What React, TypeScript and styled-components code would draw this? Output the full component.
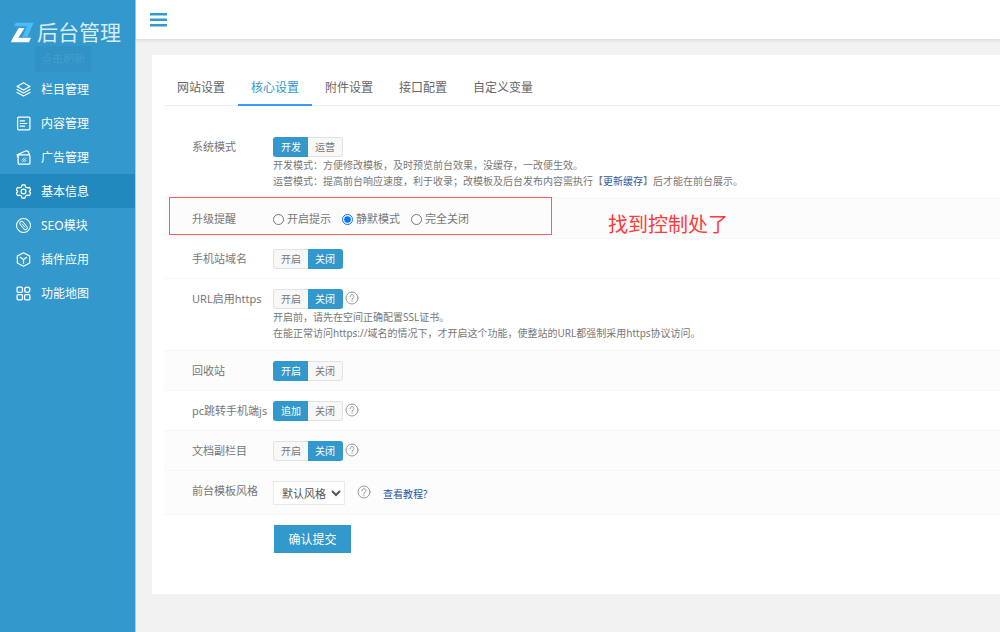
import React, { useState } from "react";
import styled, { createGlobalStyle, css } from "styled-components";

const blue = "#3398cc";

const GlobalStyle = createGlobalStyle`
  *, *::before, *::after { box-sizing: border-box; }
  body {
    margin: 0;
    background: #f2f2f2;
    color: #777;
    font-family: "Noto Sans", "Noto Sans CJK SC", sans-serif;
    font-size: 12px;
  }
  button, select, input { font-family: inherit; }
  a { text-decoration: none; }
`;

const Layout = styled.div`
  display: flex;
  min-height: 100vh;
`;

const Sidebar = styled.aside`
  flex: 0 0 136px;
  background: ${blue};
  border-right: 1px solid #a5cfe6;
`;

const Brand = styled.a`
  position: relative;
  display: flex;
  align-items: center;
  height: 72px;
  padding: 0 0 8px 11px;
  gap: 3px;
  color: #d9edf8;
  font-size: 21px;
  font-weight: 400;
  line-height: 24px;
  white-space: nowrap;
`;

const RefreshTip = styled.span`
  position: absolute;
  left: 35px;
  top: 46px;
  width: 56px;
  height: 26px;
  border-radius: 2px;
  background: #3092c5;
  color: #429fce;
  font-size: 11px;
  font-weight: 400;
  line-height: 26px;
  text-align: center;
`;

const Menu = styled.nav`
  display: flex;
  flex-direction: column;
`;

const MenuItem = styled.a<{ $active?: boolean }>`
  display: flex;
  align-items: center;
  gap: 10px;
  height: 34px;
  padding-left: 16px;
  color: #fff;
  font-size: 12px;
  background: ${(p) => (p.$active ? "#2289bf" : "transparent")};
  svg { width: 15px; height: 15px; flex: none; }
`;

const Main = styled.div`
  flex: 1;
  min-width: 0;
`;

const TopBar = styled.header`
  display: flex;
  align-items: center;
  height: 39px;
  padding-left: 14px;
  background: #fff;
  box-shadow: 0 1px 4px rgba(0, 0, 0, 0.12);
`;

const MenuButton = styled.button`
  display: flex;
  padding: 0;
  border: 0;
  background: none;
  color: ${blue};
`;

const Card = styled.section`
  margin: 16px 0 0 16px;
  padding: 15px 0 41px 12px;
  background: #fff;
`;

const Tabs = styled.nav`
  display: flex;
  height: 36px;
  border-bottom: 1px solid #eee;
`;

const Tab = styled.a<{ $active?: boolean }>`
  height: 36px;
  padding: 0 13px;
  line-height: 36px;
  color: ${(p) => (p.$active ? blue : "#666")};
  border-bottom: 2px solid ${(p) => (p.$active ? "#3a9bf5" : "transparent")};
`;

const Form = styled.form`
  padding-top: 21px;
`;

const Row = styled.div<{ $shaded?: boolean }>`
  position: relative;
  display: grid;
  grid-template-columns: 81px 1fr;
  padding: 10px 0 9px 28px;
  border-bottom: 1px solid #f7f7f7;
  background: ${(p) => (p.$shaded ? "#fcfcfc" : "#fff")};
`;

const labelText = css`
  font-size: 11px;
  line-height: 20px;
  white-space: nowrap;
`;

const RowLabel = styled.div`
  ${labelText}
`;

const Controls = styled.div<{ $gap?: number }>`
  display: flex;
  align-items: center;
  gap: ${(p) => p.$gap ?? 2}px;
`;

const ToggleGroup = styled.div`
  display: flex;
  height: 20px;
`;

const ToggleButton = styled.button<{ $on: boolean }>`
  width: 35px;
  padding: 0;
  border: 1px solid ${(p) => (p.$on ? blue : "#e2e2e2")};
  background: ${(p) => (p.$on ? blue : "#f8f8f8")};
  color: ${(p) => (p.$on ? "#fff" : "#777")};
  font-size: 10px;
  line-height: 18px;
  &:first-child { border-radius: 3px 0 0 3px; border-right: 0; }
  &:last-child { border-radius: 0 3px 3px 0; border-left: 0; }
`;

const Hint = styled.p`
  margin: 0;
  font-size: 10px;
  line-height: 16px;
`;

const TextLink = styled.a`
  color: #2a57a5;
  font-size: 10px;
`;

const RadioLabel = styled.label`
  display: flex;
  align-items: center;
  gap: 3px;
  ${labelText}
  input { width: 11px; height: 11px; margin: 0; }
`;

const ThemeSelect = styled.select`
  width: 72px;
  height: 24px;
  padding: 0 0 0 4px;
  border: 1px solid #eaeaea;
  background: #fff;
  color: #555;
  font-size: 11px;
`;

const HelpButton = styled.button`
  display: flex;
  padding: 0 0 2px;
  border: 0;
  background: none;
  color: #999;
`;

const Submit = styled.button`
  width: 77px;
  height: 28px;
  margin: 10px 0 0 110px;
  padding: 0;
  border: 0;
  background: ${blue};
  color: #fff;
  font-size: 12px;
`;

const Highlight = styled.span`
  position: absolute;
  left: 5px;
  top: -2px;
  width: 383px;
  height: 38px;
  border: 1px solid #ff5c5c;
  pointer-events: none;
`;

const Callout = styled.span`
  position: absolute;
  left: 444px;
  top: 11px;
  color: #ff3b3b;
  font-size: 20px;
  line-height: 30px;
  white-space: nowrap;
`;

const Icon = ({ children }: { children: React.ReactNode }) => (
  <svg viewBox="1 1 28 28" fill="none" stroke="currentColor" strokeWidth="2.3" strokeLinecap="round" strokeLinejoin="round" aria-hidden="true">
    {children}
  </svg>
);

const menu = [
  {
    text: "栏目管理",
    icon: <Icon><path d="M15 2.500 27 9.500 15 16 3 9.500Z" /><path d="m3 15 12 6.500L27 15M3 20.500 15 27l12-6.500" /></Icon>,
  },
  {
    text: "内容管理",
    icon: <Icon><rect x="4" y="3" width="23" height="24" rx="2" /><path d="M9 10h8M9 15h12M9 20h8" /></Icon>,
  },
  {
    text: "广告管理",
    icon: <Icon><rect x="5" y="10" width="22" height="17.500" rx="2" /><path d="M3 10 20 2.500l3.500 1L26 10M3 10l2 5" /><path d="m12 20 4-4M13 23l7-7M17 23l3-3" strokeWidth="1.600" /></Icon>,
  },
  {
    text: "基本信息",
    icon: <Icon><path d="M12.500 2.500h5l1.500 4 3 1.700 4-.8 2.500 4.300-2.700 3.300 2.700 3.300-2.500 4.300-4-.8-3 1.700-1.500 4h-5l-1.500-4-3-1.700-4 .8-2.500-4.300L4.200 15l-2.700-3.300L4 7.400l4 .8 3-1.700Z" /><circle cx="15" cy="15" r="4.500" /></Icon>,
  },
  {
    text: "SEO模块",
    icon: <Icon><circle cx="15" cy="15" r="13" strokeWidth="2" /><rect x="6" y="11.500" width="18" height="7" rx="3.500" transform="rotate(50 15 15)" strokeWidth="1.800" /><path d="m12.500 12 5 6" strokeWidth="1.800" /></Icon>,
  },
  {
    text: "插件应用",
    icon: <Icon><path d="M15 2.500 26.500 8.500v13L15 27.500 3.500 21.500v-13Z" /><path d="m9 11 6 4 6-4M15 15v7" /></Icon>,
  },
  {
    text: "功能地图",
    icon: <Icon><rect x="3" y="3" width="10" height="10" rx="2" /><circle cx="22" cy="8" r="5" /><rect x="3" y="17" width="10" height="10" rx="2" /><rect x="17" y="17" width="10" height="10" rx="2" /></Icon>,
  },
];

const tabs = ["网站设置", "核心设置", "附件设置", "接口配置", "自定义变量"];
const reminders = ["开启提示", "静默模式", "完全关闭"];

const Help = () => (
  <HelpButton type="button" aria-label="帮助">
    <svg width="14" height="14" viewBox="0 0 28 28" fill="none" stroke="currentColor" strokeWidth="2" strokeLinecap="round">
      <circle cx="14" cy="14" r="12" />
      <path d="M10 11.500c0-5.500 8-5.500 8-.5 0 3-4 3-4 6.500M14 20.500v.5" />
    </svg>
  </HelpButton>
);

interface ToggleProps {
  label: string;
  options?: string[];
  initial: number;
}

const Toggle = ({ label, options = ["开启", "关闭"], initial }: ToggleProps) => {
  const [selected, setSelected] = useState(initial);
  return (
    <ToggleGroup role="group" aria-label={label}>
      {options.map((text, i) => (
        <ToggleButton key={text} type="button" $on={selected === i} aria-pressed={selected === i} onClick={() => setSelected(i)}>
          {text}
        </ToggleButton>
      ))}
    </ToggleGroup>
  );
};

interface ToggleRowProps extends ToggleProps {
  shaded?: boolean;
  help?: boolean;
  children?: React.ReactNode;
}

const ToggleRow = ({ shaded, help, children, ...toggle }: ToggleRowProps) => (
  <Row $shaded={shaded}>
    <RowLabel>{toggle.label}</RowLabel>
    <div>
      <Controls>
        <Toggle {...toggle} />
        {help && <Help />}
      </Controls>
      {children}
    </div>
  </Row>
);

export default function App() {
  const [reminder, setReminder] = useState("静默模式");
  return (
    <>
      <GlobalStyle />
      <Layout>
        <Sidebar>
          <Brand href="#">
            <svg width="23" height="21" viewBox="0 0 69 63" aria-hidden="true">
              <path d="M14 2h54L50 44H35L48 13H9Z" fill="#4abcf8" />
              <path d="M23 18h18L22 47h38l-6 14H0l4-11Z" fill="#fff" />
            </svg>
            后台管理
            <RefreshTip>点击刷新</RefreshTip>
          </Brand>
          <Menu>
            {menu.map((m) => (
              <MenuItem key={m.text} href="#" $active={m.text === "基本信息"}>
                {m.icon}
                {m.text}
              </MenuItem>
            ))}
          </Menu>
        </Sidebar>
        <Main>
          <TopBar>
            <MenuButton type="button" aria-label="菜单">
              <svg width="17" height="14" viewBox="0 0 17 14" fill="currentColor">
                <path d="M0 0h17v2.500H0zM0 5.500h17v2.500H0zM0 11h17v2.500H0z" />
              </svg>
            </MenuButton>
          </TopBar>
          <Card>
            <Tabs>
              {tabs.map((t) => (
                <Tab key={t} href="#" $active={t === "核心设置"}>{t}</Tab>
              ))}
            </Tabs>
            <Form onSubmit={(e) => e.preventDefault()}>
              <ToggleRow label="系统模式" options={["开发", "运营"]} initial={0}>
                <Hint>开发模式：方便修改模板，及时预览前台效果，没缓存，一改便生效。</Hint>
                <Hint>
                  运营模式：提高前台响应速度，利于收录；改模板及后台发布内容需执行【<TextLink href="#">更新缓存</TextLink>】后才能在前台展示。
                </Hint>
              </ToggleRow>
              <Row $shaded>
                <RowLabel>升级提醒</RowLabel>
                <Controls $gap={11} role="radiogroup" aria-label="升级提醒">
                  {reminders.map((r) => (
                    <RadioLabel key={r}>
                      <input type="radio" name="reminder" checked={reminder === r} onChange={() => setReminder(r)} />
                      {r}
                    </RadioLabel>
                  ))}
                </Controls>
                <Highlight />
                <Callout>找到控制处了</Callout>
              </Row>
              <ToggleRow label="手机站域名" initial={1} />
              <ToggleRow label="URL启用https" initial={1} help>
                <Hint>开启前，请先在空间正确配置SSL证书。</Hint>
                <Hint>在能正常访问https://域名的情况下，才开启这个功能，使整站的URL都强制采用https协议访问。</Hint>
              </ToggleRow>
              <ToggleRow label="回收站" initial={0} shaded />
              <ToggleRow label="pc跳转手机端js" options={["追加", "关闭"]} initial={0} help />
              <ToggleRow label="文档副栏目" initial={1} shaded help />
              <Row $shaded>
                <RowLabel as="label" htmlFor="theme">前台模板风格</RowLabel>
                <Controls $gap={12}>
                  <ThemeSelect id="theme">
                    <option>默认风格</option>
                  </ThemeSelect>
                  <Help />
                  <TextLink href="#">查看教程?</TextLink>
                </Controls>
              </Row>
              <Submit type="submit">确认提交</Submit>
            </Form>
          </Card>
        </Main>
      </Layout>
    </>
  );
}
